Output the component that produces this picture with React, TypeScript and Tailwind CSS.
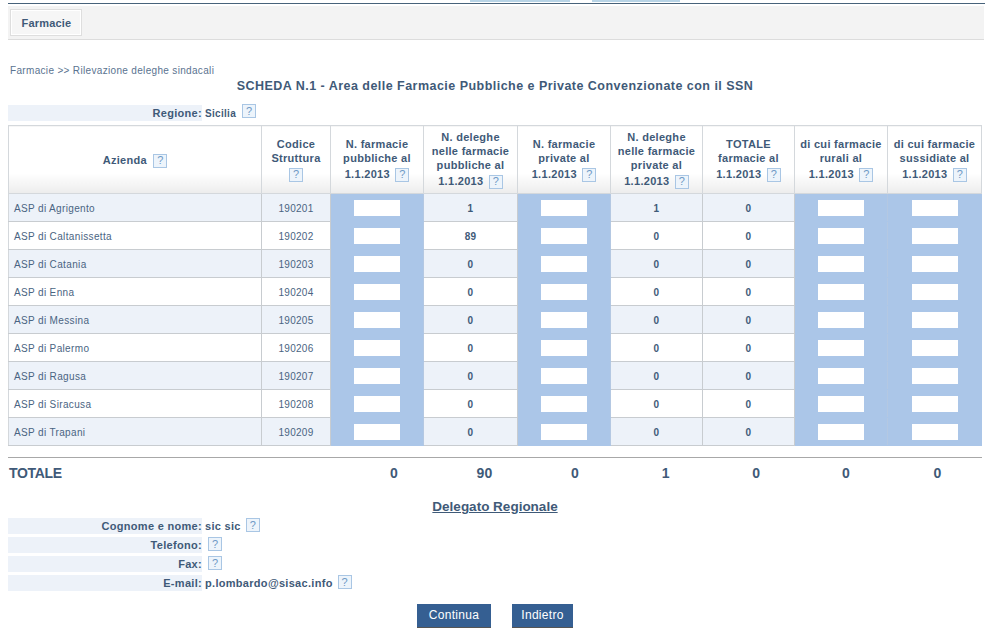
const font = "[font-family:'Liberation_Sans',Arial,sans-serif]";

const Help = () => (
  <span className="inline-flex h-[14px] w-[14px] items-center justify-center border border-[#a9c6e4] bg-[#edf4fb] align-[-2px] text-[11px] leading-none font-normal tracking-normal text-[#6f9ac6]">
    ?
  </span>
);

const headers = [
  { lines: ["N. farmacie", "pubbliche al"], w: "w-[93px]" },
  { lines: ["N. deleghe", "nelle farmacie", "pubbliche al"], w: "w-[94px]" },
  { lines: ["N. farmacie", "private al"], w: "w-[93px]" },
  { lines: ["N. deleghe", "nelle farmacie", "private al"], w: "w-[92px]" },
  { lines: ["TOTALE", "farmacie al"], w: "w-[92px]" },
  { lines: ["di cui farmacie", "rurali al"], w: "w-[93px]" },
  { lines: ["di cui farmacie", "sussidiate al"], w: "w-[94px]" },
];

const rows = [
  ["ASP di Agrigento", "190201", "1", "1"],
  ["ASP di Caltanissetta", "190202", "89", "0"],
  ["ASP di Catania", "190203", "0", "0"],
  ["ASP di Enna", "190204", "0", "0"],
  ["ASP di Messina", "190205", "0", "0"],
  ["ASP di Palermo", "190206", "0", "0"],
  ["ASP di Ragusa", "190207", "0", "0"],
  ["ASP di Siracusa", "190208", "0", "0"],
  ["ASP di Trapani", "190209", "0", "0"],
];

const totals = [
  { v: "0", w: "w-[91px]" },
  { v: "90", w: "w-[90px]" },
  { v: "0", w: "w-[91px]" },
  { v: "1", w: "w-[91px]" },
  { v: "0", w: "w-[90px]" },
  { v: "0", w: "w-[90px]" },
  { v: "0", w: "w-[91px] pl-[2px]" },
];

const thCell =
  "border-r border-b border-[#d4d8dc] bg-gradient-to-b from-white from-70% to-[#ececec] align-middle px-0 py-0 text-center font-bold text-[11px] leading-[14px] tracking-[0.3px] text-[#3f5a78]";

const InputCell = ({ last }: { last?: boolean }) => (
  <td className={`border-b border-b-[#abc6e8] border-[#b4c8e2] bg-[#abc6e8] p-0 text-center ${last ? "" : "border-r"}`}>
    <div className="mx-auto h-[16px] w-[46px] bg-white" />
  </td>
);

const ValueCell = ({ v }: { v: string }) => (
  <td className="border-r border-b border-[#c8ccd0] pt-[2px] text-center text-[10px] font-bold tracking-[0.3px] text-[#3f5a78]">
    {v}
  </td>
);

const ContactRow = ({ label, value }: { label: string; value?: string }) => (
  <div className="flex h-[16px] items-center">
    <div className="w-[194px] bg-[#edf2f9] text-right text-[11px] font-bold tracking-[0.3px] text-[#3f5a78]">
      {label}
    </div>
    <div className="ml-[3px] flex items-center text-[11px] font-bold tracking-[0.3px] text-[#3f5a78]">
      {value ? <span className="mr-[5px]">{value}</span> : <span className="w-[3px]" />}
      <div className="mb-[2px] flex">
        <Help />
      </div>
    </div>
  </div>
);

export default function App() {
  return (
    <div className={`${font} h-[635px] w-[990px] overflow-hidden bg-white pl-[8px]`}>
      <div className="flex h-[3px] bg-white">
        <div className="ml-[462px] h-[2px] w-[100px] bg-[#b8d4e6]" />
        <div className="ml-[22px] h-[2px] w-[88px] bg-[#b8d4e6]" />
      </div>
      <div className="mr-[5px] h-px bg-[#47627a]" />
      <div className="mt-[2px] h-[34px] w-[976px] border-b border-[#dcdcdc] bg-[#f3f3f3] pt-[3px] pl-[2px]">
        <div className="flex h-[27px] w-[72px] items-center justify-center border border-[#dedede] bg-[#f6f6f6] pt-px pl-px text-[11px] font-bold tracking-[0.2px] text-[#3f5a78] shadow-[inset_0_0_0_1px_#ffffff]">
          Farmacie
        </div>
      </div>

      <div className="mt-[25px] pl-[2px] text-[10px] leading-[12px] tracking-[0.33px] text-[#5a7390]">
        Farmacie &gt;&gt; Rilevazione deleghe sindacali
      </div>
      <h1 className="mt-px w-[974px] text-center text-[12.5px] leading-[16px] font-bold tracking-[0.47px] text-[#3f5a78]">
        SCHEDA N.1 - Area delle Farmacie Pubbliche e Private Convenzionate con il SSN
      </h1>

      <div className="mt-[11px] flex h-[16px] items-center">
        <span className="w-[194px] bg-[#edf2f9] pl-px text-right text-[11px] font-bold tracking-[0.3px] text-[#3f5a78]">Regione:</span>
        <span className="ml-[3px] text-[10px] font-bold tracking-[0.3px] text-[#3f5a78]">Sicilia</span>
        <div className="mb-[4px] ml-[6px] flex">
          <Help />
        </div>
      </div>

      <table className="mt-[4px] w-[973px] table-fixed border-collapse border-t border-l border-[#d4d8dc]">
        <thead>
          <tr className="h-[68px]">
            <th className={`${thCell} w-[253px]`}>
              Azienda <span className="ml-[3px] align-[2px]"><Help /></span>
            </th>
            <th className={`${thCell} w-[69px]`}>
              Codice
              <br />
              Struttura
              <br />
              <span className="align-[2px]"><Help /></span>
            </th>
            {headers.map((h, i) => (
              <th key={i} className={`${thCell} ${h.w}`}>
                {h.lines.map((l) => (
                  <div key={l}>{l}</div>
                ))}
                <div>
                  1.1.2013 <span className="ml-[2px] align-[2px]"><Help /></span>
                </div>
              </th>
            ))}
          </tr>
        </thead>
        <tbody>
          {rows.map((r, i) => (
            <tr key={r[0]} className={`h-[28px] ${i % 2 === 0 ? "bg-[#edf2f9]" : "bg-white"}`}>
              <td className="border-r border-b border-[#c8ccd0] pt-[2px] pl-[5px] text-[10px] tracking-[0.35px] text-[#4a6482]">{r[0]}</td>
              <td className="border-r border-b border-[#c8ccd0] pt-[2px] text-center text-[10px] tracking-[0.3px] text-[#4a6482]">{r[1]}</td>
              <InputCell />
              <ValueCell v={r[2]} />
              <InputCell />
              <ValueCell v={r[3]} />
              <ValueCell v="0" />
              <InputCell />
              <InputCell last />
            </tr>
          ))}
        </tbody>
      </table>

      <div className="mt-[11px] flex h-[31px] w-[974px] items-center border-t border-[#a8a8a8]">
        <div className="w-[341px] pl-px text-[14px] font-bold tracking-[-0.3px] text-[#3f5a78]">TOTALE</div>
        {totals.map((t, i) => (
          <div key={i} className={`${t.w} text-center text-[14px] font-bold tracking-[0.3px] text-[#3f5a78]`}>
            {t.v}
          </div>
        ))}
      </div>

      <div className="mt-[10px] w-[974px] text-center text-[13.5px] leading-[18px] font-bold text-[#3f5a78]">
        <span className="underline">Delegato Regionale</span>
      </div>

      <div className="mt-[2px] flex flex-col gap-[3px]">
        <ContactRow label="Cognome e nome:" value="sic sic" />
        <ContactRow label="Telefono:" />
        <ContactRow label="Fax:" />
        <ContactRow label="E-mail:" value="p.lombardo@sisac.info" />
      </div>

      <div className="mt-[13px] ml-[409px] flex gap-[21px]">
        <button className="h-[23px] w-[74px] bg-[#355f92] pb-[2px] text-[12px] tracking-[0.3px] text-white shadow-[0_1px_0_#555]">Continua</button>
        <button className="h-[23px] w-[61px] bg-[#355f92] pb-[2px] text-[12px] tracking-[0.3px] text-white shadow-[0_1px_0_#555]">Indietro</button>
      </div>
    </div>
  );
}
